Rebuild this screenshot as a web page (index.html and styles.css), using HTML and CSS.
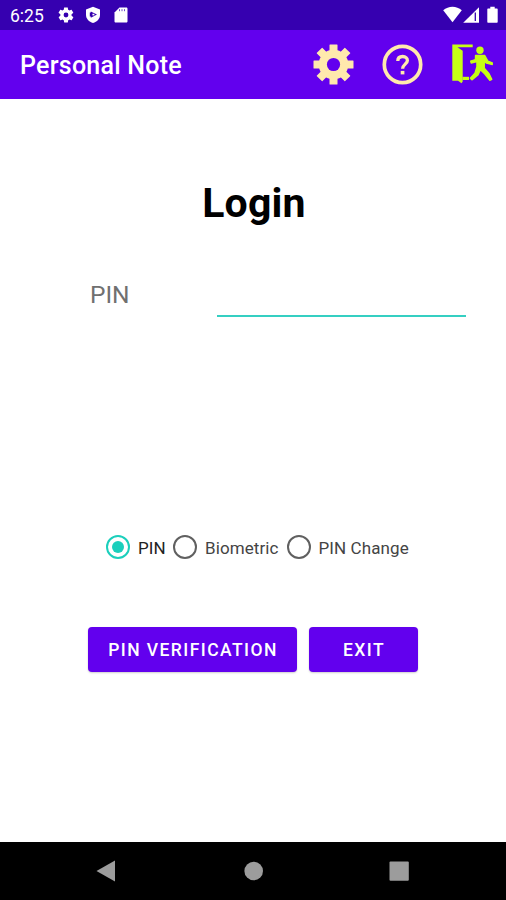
FILE: index.html
```html
<!DOCTYPE html>
<html lang="en">
<head>
<meta charset="utf-8">
<title>Personal Note</title>
<link rel="stylesheet" href="styles.css">
</head>
<body>
<div class="screen">
  <div class="status">
    <span class="time">6:25</span>
    <svg class="s-gear" width="18" height="18" viewBox="0 0 24 24"><path fill="#fff" fill-rule="evenodd" d="M19.4 13a7.500 7.500 0 0 0 0-2l2.100-1.600c.2-.2.2-.4.100-.6l-2-3.500c-.1-.2-.4-.3-.6-.2l-2.500 1a7.300 7.300 0 0 0-1.700-1l-.4-2.600c0-.3-.2-.5-.5-.5h-4c-.2 0-.4.200-.5.400l-.4 2.700c-.6.200-1.200.6-1.700 1l-2.500-1c-.2-.1-.5 0-.6.200l-2 3.500c-.1.200-.1.400.1.600L4.500 11a8 8 0 0 0 0 2l-2.100 1.600c-.2.200-.2.400-.1.600l2 3.500c.1.200.4.300.6.200l2.500-1c.5.400 1.100.7 1.700 1l.4 2.600c.1.300.3.500.5.500h4c.3 0 .5-.2.500-.4l.4-2.700c.6-.2 1.200-.6 1.700-1l2.500 1c.2.100.5 0 .6-.2l2-3.500c.1-.2.100-.4-.1-.6zM12 15.200a3.200 3.200 0 1 1 0-6.400 3.200 3.200 0 0 1 0 6.400z"/></svg>
    <svg class="s-shield" width="16" height="18" viewBox="0 0 16 18"><path fill="#fff" d="M8 .8 15 3.500V9c0 3.700-3 6.800-7 8-4-1.200-7-4.300-7-8V3.500z"/><path fill="#3600b0" d="M5.800 5.400v1.200h-1v4h1v1.200L12 8.600z"/><path fill="#fff" d="M7.400 7.800h2v1.600h-2z"/></svg>
    <svg class="s-card" width="14" height="16" viewBox="0 0 14 16"><path fill="#fff" d="M5.500.5h6.700c.8 0 1.300.5 1.300 1.300v12.400c0 .8-.5 1.300-1.300 1.300H1.800c-.8 0-1.300-.5-1.300-1.300V5.500z"/><path stroke="#6d48c8" stroke-width="1" d="M5.500 2.200v2M8 2.200v2M10.500 2.200v2"/></svg>
    <svg class="s-right" width="57" height="18" viewBox="0 0 57 18"><path fill="#fff" d="M.2 4.300C5.500-.4 13.500-.4 18.800 4.300L9.500 16.300z"/><path fill="#fff" d="M36 1.200v15.600H20.200z"/><path stroke="#3600b0" stroke-width="1.300" d="M32.300 6.500v8.500"/><path fill="#fff" d="M47.300.8h4.400v1.800h2c.6 0 1 .4 1 1v12.200c0 .6-.4 1-1 1h-8.400c-.6 0-1-.4-1-1V3.600c0-.6.400-1 1-1h2z"/></svg>
  </div>
  <header class="appbar">
    <div class="title">Personal Note</div>
    <div class="actions">
      <svg width="41" height="41" viewBox="-20.500 -20.500 41 41">
        <g fill="#ffe9ad"><circle r="14.800"/>
          <rect x="-4" y="-20" width="8" height="40" rx=".5"/>
          <rect x="-20" y="-4" width="40" height="8" rx=".5"/>
          <rect x="-4" y="-20" width="8" height="40" rx=".5" transform="rotate(45)"/>
          <rect x="-4" y="-20" width="8" height="40" rx=".5" transform="rotate(-45)"/></g>
        <circle r="6.600" fill="#6200ee"/>
      </svg>
      <svg width="41" height="41" viewBox="-20.500 -20.500 41 41">
        <g fill="none" stroke="#ffe9ad"><circle r="18.200" stroke-width="3.700"/>
        <path stroke-width="3.300" d="M-4.700-3.500C-4.700-6.500-2.700-8 .2-8S4.900-6.300 4.900-4C4.900-.6.100 0 .1 4.200"/></g>
        <rect x="-1.800" y="6.400" width="3.700" height="3.500" fill="#ffe9ad"/>
      </svg>
      <svg class="leave" width="42" height="41" viewBox="0 0 42 41">
        <g fill="#c6ff14"><path d="M.3.500H20.700v2.800H5.500l5.200 3.400V37.500l-1.200 1.800-3.500-2.500H.3z"/><path d="M10.500 32.800h6.500v3.200h-6.500z"/><circle cx="28" cy="6.300" r="3.700"/></g>
        <path fill="#c6ff14" stroke="#c6ff14" stroke-width="1.300" stroke-linejoin="round" d="M23.500 11.500h9.300l3.200 5.700 4.300 1.600v1.700l-5.800-1.300-2.200-2v7.100l4.800 5.500 2.700 5.500-2 1-5-6.200-4.400-4.300-2.500 5.300-6 4.800-1.600-1.600 4.600-5 2-6.500v-5.300l-5.700 1.500-.6-2 4.800-1.500z"/>
      </svg>
    </div>
  </header>
  <main class="content">
    <h1>Login</h1>
    <div class="field"><label for="pin">PIN</label><input id="pin" type="password"></div>
    <div class="choices">
      <div class="choice on"><i></i><span>PIN</span></div>
      <div class="choice bio"><i></i><span>Biometric</span></div>
      <div class="choice change"><i></i><span>PIN Change</span></div>
    </div>
    <div class="buttons"><button class="verify">PIN VERIFICATION</button><button class="exit">EXIT</button></div>
  </main>
  <nav class="navbar">
    <svg width="506" height="58" viewBox="0 0 506 58" fill="#9c9c9c"><path d="M96.500 29 115 18.500v21z"/><circle cx="253.700" cy="29" r="9.300"/><rect x="389.500" y="19.500" width="19.300" height="19.300" rx="1"/></svg>
  </nav>
</div>
</body>
</html>
```
FILE: styles.css
```css
* { box-sizing: border-box; }
body { margin: 0; font-family: Roboto, "Liberation Sans", sans-serif; background: #fff; }
svg { display: block; flex: none; }
.screen { width: 506px; height: 900px; display: flex; flex-direction: column; overflow: hidden; }
.status { height: 30px; flex: none; background: #3600b0; display: flex; align-items: center; padding-left: 10px; color: #fff; }
.time { width: 47px; font-size: 17.500px; line-height: 20px; padding-top: 2px; font-weight: 400; }
.s-shield { margin-left: 10px; }
.s-card { margin-left: 13px; }
.s-right { margin-left: auto; margin-right: 6px; }
.appbar { height: 69px; flex: none; background: #6200ee; display: flex; align-items: center; justify-content: space-between; padding: 0 13px 1px 20px; }
.title { color: #fff; font-size: 25px; font-weight: 500; line-height: 30px; padding-top: 4px; letter-spacing: .25px; white-space: nowrap; }
.actions { display: flex; gap: 28px; }
.leave { margin-left: 1px; margin-right: -1px; }
.content { flex: 1; background: #fff; display: flex; flex-direction: column; }
h1 { margin: 79px 0 0 2px; font-size: 41px; line-height: 50px; font-weight: 700; letter-spacing: .2px; color: #000; text-align: center; }
.field { display: flex; align-items: center; height: 44px; margin: 45px 40px 0 90px; }
label { width: 127px; font-size: 24.500px; font-weight: 400; color: #707070; line-height: 30px; }
input { width: 249px; height: 44px; border: 0; border-bottom: 2px solid #35cfc2; outline: 0; padding: 0; background: transparent; }
.choices { display: flex; height: 26px; margin: 217px 0 0 106px; }
.choice { display: flex; align-items: center; gap: 8px; font-size: 17px; color: #444; font-weight: 400; letter-spacing: .1px; white-space: nowrap; }
.choice span { padding-top: 1px; }
.choice i { width: 24px; height: 24px; border: 2px solid #606060; border-radius: 50%; display: grid; place-items: center; flex: none; }
.on { width: 67px; color: #222; }
.bio { width: 113.500px; }
.on i { border-color: #1bcfbc; }
.on i::after { content: ""; width: 12px; height: 12px; border-radius: 50%; background: #1bcfbc; }
.buttons { display: flex; gap: 12px; margin: 67px 0 0 88px; }
button { height: 45px; border: 0; border-radius: 4px; padding: 1px 0 0 1px; background: #6200ee; color: #fff; font: 500 17.500px/44px Roboto, "Liberation Sans", sans-serif; letter-spacing: 1.430px; box-shadow: 0 1px 2px rgba(0, 0, 0, .2); }
.verify { width: 209px; }
.exit { width: 109px; }
.navbar { height: 58px; flex: none; background: #000; }
```
